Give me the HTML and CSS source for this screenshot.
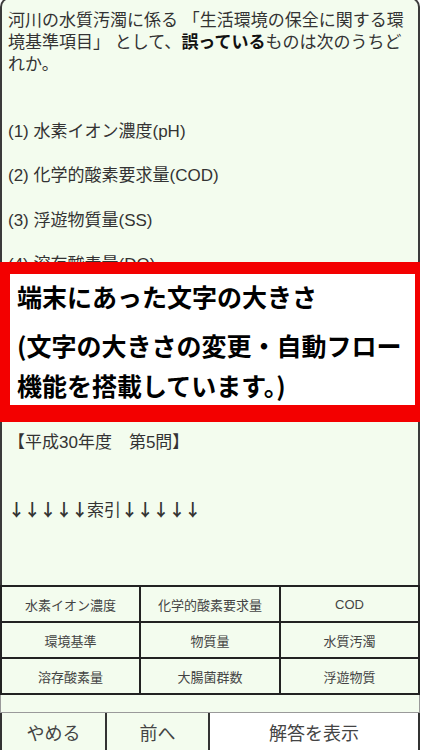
FILE: index.html
```html
<!DOCTYPE html>
<html lang="ja">
<head>
<meta charset="utf-8">
<title>問題</title>
<link rel="stylesheet" href="styles.css">
</head>
<body>
<div class="screen">
  <div class="content">
    <p class="q">河川の水質汚濁に係る 「生活環境の保全に関する環境基準項目」 として、<b>誤っている</b>ものは次のうちどれか。</p>
    <p class="l g2">(1) 水素イオン濃度(pH)</p>
    <p class="l g1">(2) 化学的酸素要求量(COD)</p>
    <p class="l g1">(3) 浮遊物質量(SS)</p>
    <p class="l g1">(4) 溶存酸素量(DO)</p>
    <p class="l g1">(5) 大腸菌群数</p>
    <p class="l g5">【平成30年度　第5問】</p>
    <p class="l g2"><span class="cjk">↓↓↓↓↓</span>索引<span class="cjk">↓↓↓↓↓</span></p>
  </div>
  <div class="grid">
    <div class="cell">水素イオン濃度</div>
    <div class="cell">化学的酸素要求量</div>
    <div class="cell">COD</div>
    <div class="cell">環境基準</div>
    <div class="cell">物質量</div>
    <div class="cell">水質汚濁</div>
    <div class="cell">溶存酸素量</div>
    <div class="cell">大腸菌群数</div>
    <div class="cell">浮遊物質</div>
  </div>
  <div class="band"></div>
  <div class="actions">
    <div class="btn b1">やめる</div>
    <div class="btn b2">前へ</div>
    <div class="btn b3">解答を表示</div>
  </div>
  <div class="overlay">
    <div class="notice">
      <p class="n1">端末にあった文字の大きさ</p>
      <p class="n2">(文字の大きさの変更・自動フロー</p>
      <p class="n2">機能を搭載しています。)</p>
    </div>
  </div>
</div>
</body>
</html>
```

FILE: styles.css
```css
html, body {
  margin: 0;
  padding: 0;
  background: #ffffff;
}
body {
  font-family: "Liberation Sans", "Noto Sans CJK JP", sans-serif;
  color: #333333;
}
.screen {
  position: relative;
  width: 420px;
  height: 750px;
  display: flex;
  flex-direction: column;
  overflow: hidden;
}
.content {
  flex: 1;
  margin-top: -3px;
  background: #f3fcee;
  border: 2px solid #3a3a3a;
  border-bottom: none;
  border-radius: 10px 10px 0 0;
  padding: 11px 6px 0 6px;
  font-size: 17px;
  line-height: 22.2px;
  overflow: hidden;
}
.content p {
  margin: 0;
}
.q b {
  color: #111111;
  font-weight: bold;
}
.g1 { margin-top: 22.2px !important; }
.g2 { margin-top: 44.4px !important; }
.g5 { margin-top: 111px !important; }
.cjk {
  font-family: "Noto Sans CJK JP", sans-serif;
  letter-spacing: -1.2px;
  font-weight: bold;
}
.grid {
  height: 110px;
  box-sizing: border-box;
  padding: 2px;
  background: #222222;
  display: grid;
  grid-template-columns: 137px 138px 137px;
  grid-template-rows: 34px 34px 34px;
  gap: 2px;
}
.cell {
  background: #f3fcee;
  display: flex;
  align-items: center;
  justify-content: center;
  font-size: 13px;
  color: #444444;
}
.band {
  height: 18px;
  box-sizing: border-box;
  background: #f3fcee;
  border: 1px solid #9a9a9a;
  border-top: none;
}
.actions {
  height: 37px;
  display: flex;
  border-left: 2px solid #333333;
  border-right: 2px solid #333333;
}
.btn {
  display: flex;
  align-items: center;
  justify-content: center;
  font-size: 18px;
  color: #444444;
  background: #f3fcee;
}
.b1 {
  width: 103px;
  border-right: 2px solid #333333;
}
.b2 {
  width: 101px;
  border-right: 2px solid #333333;
}
.b3 {
  flex: 1;
  background: #ffffff;
}
.overlay {
  position: absolute;
  top: 262px;
  left: 0;
  width: 422px;
  height: 160px;
  box-sizing: border-box;
  padding: 12px 7px 17px 10px;
  background: #f30000;
}
.notice {
  height: 100%;
  background: #ffffff;
  padding-left: 7px;
  box-sizing: border-box;
  font-family: "Noto Sans CJK JP", sans-serif;
  font-weight: bold;
  font-size: 25px;
  color: #000000;
  overflow: hidden;
}
.notice p {
  margin: 0;
  line-height: 40px;
  white-space: nowrap;
}
.n1 {
  margin-top: 2px !important;
  margin-bottom: 9px !important;
}
```
